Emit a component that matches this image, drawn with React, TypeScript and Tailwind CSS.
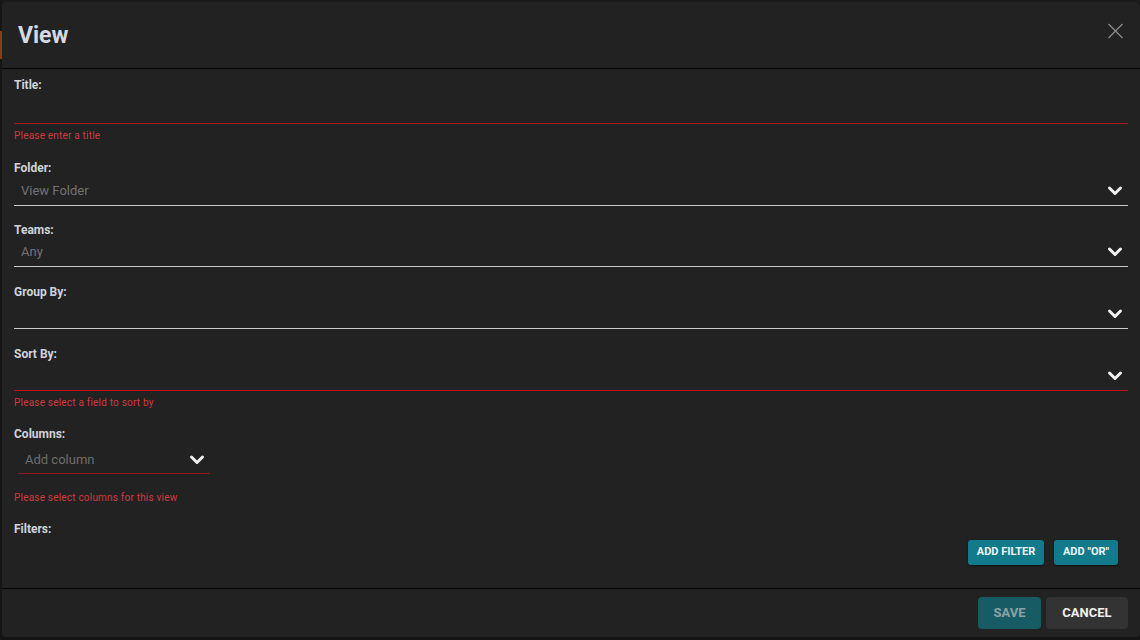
import React from "react";

const Chevron = () => (
  <svg width="16" height="12" viewBox="0 0 16 12" className="shrink-0">
    <path d="M2.5 3 L8 8.5 L13.5 3" fill="none" stroke="#f0f0f0" strokeWidth="3" strokeLinecap="round" strokeLinejoin="round" />
  </svg>
);

const Label = ({ children }: { children: React.ReactNode }) => (
  <div className="h-[16px] text-[12px] leading-[16px] font-bold text-[#cfd4db]">{children}</div>
);

const ErrorText = ({ children, className }: { children: React.ReactNode; className?: string }) => (
  <div className={"h-[12px] text-[10px] leading-[12px] text-[#d03a40] tracking-[0.2px] " + (className || "")}>{children}</div>
);

const Select = ({ placeholder, red, tall }: { placeholder?: string; red?: boolean; tall?: boolean }) => (
  <div
    className={
      "flex items-center justify-between border-b pl-[7px] pr-[5px] " +
      (tall ? "h-[30px] pt-[1px] " : "h-[29px] ") +
      (red ? "border-[#c0101a]" : "border-[#c9c9c9]")
    }
  >
    <span className="text-[13px] text-[#737373]">{placeholder}</span>
    <Chevron />
  </div>
);

export default function App() {
  return (
    <div
      className="flex h-[640px] w-[1140px] overflow-hidden bg-[#151515]"
      style={{ fontFamily: "Roboto, 'Liberation Sans', sans-serif" }}
    >
      <div className="flex w-[2px] shrink-0 flex-col">
        <div className="h-[31px]" />
        <div className="h-[28px] bg-[#8a3c12]" />
      </div>
      <div className="flex flex-1 flex-col">
        <div className="h-[2px] bg-[#1b1b1b]" />
        <div className="flex h-[635px] w-[1138px] flex-col overflow-hidden rounded-[4px] bg-[#222222]">
          {/* Header */}
          <div className="flex h-[67px] shrink-0 items-start justify-between border-b border-[#050505] pl-[16px] pr-[16px]">
            <div className="mt-[18px] text-[23px] font-bold leading-[32px] text-[#d4dae3]">View</div>
            <svg width="17" height="16" viewBox="0 0 17 16" className="mt-[21px]">
              <path d="M1.5 1 L15.5 15 M15.5 1 L1.5 15" stroke="#8a8a8a" strokeWidth="1.3" />
            </svg>
          </div>

          {/* Body */}
          <div className="flex flex-1 flex-col pl-[12px] pr-[12px] pt-[8px]">
            <Label>Title:</Label>
            <div className="h-[31px] border-b border-[#a8161e]" />
            <ErrorText className="mt-[6px]">Please enter a title</ErrorText>

            <div className="mt-[18px]">
              <Label>Folder:</Label>
              <Select placeholder="View Folder" tall />
            </div>
            <div className="mt-[16px]">
              <Label>Teams:</Label>
              <Select placeholder="Any" />
            </div>
            <div className="mt-[17px]">
              <Label>Group By:</Label>
              <Select />
            </div>
            <div className="mt-[17px]">
              <Label>Sort By:</Label>
              <Select red />
            </div>
            <ErrorText className="mt-[6px]">Please select a field to sort by</ErrorText>

            <div className="mt-[17px]">
              <Label>Columns:</Label>
              <div className="ml-[4px] flex h-[32px] w-[192px] items-center justify-between border-b border-[#8c1a1c] pl-[7px] pr-[5px] pt-[5px]">
                <span className="text-[13px] text-[#6e6e6e]">Add column</span>
                <Chevron />
              </div>
            </div>
            <ErrorText className="mt-[18px]">Please select columns for this view</ErrorText>

            <div className="mt-[17px]">
              <Label>Filters:</Label>
            </div>
            <div className="mt-[3px] flex justify-end gap-[10px] pr-[10px]">
              <button className="h-[25px] w-[76px] rounded-[3px] bg-[#127b8b] text-[11px] font-bold text-[#eef4f5] shadow-[0_1px_2px_rgba(0,0,0,0.5)]">
                ADD FILTER
              </button>
              <button className="h-[25px] w-[64px] rounded-[3px] bg-[#127b8b] text-[11px] font-bold text-[#eef4f5] shadow-[0_1px_2px_rgba(0,0,0,0.5)]">
                ADD "OR"
              </button>
            </div>
          </div>

          {/* Footer */}
          <div className="flex h-[49px] shrink-0 items-start justify-end gap-[5px] border-t border-[#050505] pr-[12px] pt-[8px]">
            <button className="h-[32px] w-[63px] rounded-[4px] bg-[#175b65] text-[13px] font-bold text-[#8ba3a7]">
              SAVE
            </button>
            <button className="h-[32px] w-[82px] rounded-[4px] bg-[#333333] text-[13px] font-bold text-[#f0f0f0]">
              CANCEL
            </button>
          </div>
        </div>
      </div>
    </div>
  );
}
